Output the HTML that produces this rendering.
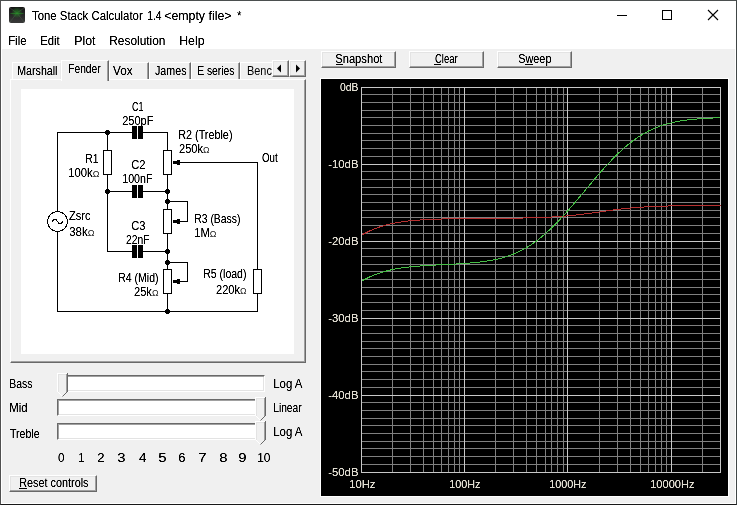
<!DOCTYPE html>
<html><head><meta charset="utf-8">
<style>
*{margin:0;padding:0;box-sizing:border-box}
html,body{width:737px;height:505px;overflow:hidden}
body{position:relative;background:#f0f0f0;font-family:"Liberation Sans",sans-serif;color:#000;font-size:11px}
.a{position:absolute}
.t{position:absolute;white-space:nowrap;line-height:11px;font-size:11px}
.btn{position:absolute;background:#f0f0f0;border-style:solid;border-width:1px;border-color:#fff #696969 #696969 #fff;box-shadow:inset -1px -1px #a0a0a0,inset 1px 1px #e3e3e3;text-align:center;font-size:11px;line-height:13px}
.u{text-decoration:underline}
.tab{position:absolute;background:#f0f0f0;border-style:solid;border-width:1px 1px 0 1px;border-color:#fff #696969 #fff #fff;box-shadow:inset -1px 0 #a0a0a0;font-size:11px;line-height:13px}
.trk{position:absolute;background:#fff;border-style:solid;border-width:1px;border-color:#696969 #fff #fff #696969;box-shadow:inset 1px 1px #a0a0a0,inset -1px -1px #e3e3e3}
.lbl{position:absolute;color:#dcdcd4;font-size:11px;line-height:11px;white-space:nowrap}
</style></head><body>
<!-- window chrome -->
<div class="a" style="left:0;top:0;width:737px;height:49px;background:#fff"></div>
<div class="a" style="left:1;top:49px;width:1px;height:455px;background:#fff;left:1px"></div>
<div class="a" style="left:735px;top:49px;width:1px;height:455px;background:#fff"></div>
<div class="a" style="left:0;top:503px;width:737px;height:1px;background:#fff"></div>
<div class="a" style="left:0;top:0;width:737px;height:505px;border-style:solid;border-width:1px;border-color:#4b4f4f #404646 #181818 #505050"></div>
<!-- app icon -->
<svg class="a" style="left:9px;top:7px" width="16" height="16" viewBox="0 0 16 16">
<defs><linearGradient id="ig" x1="0" y1="0" x2="0" y2="1"><stop offset="0" stop-color="#141414"/><stop offset="1" stop-color="#3a3a3a"/></linearGradient>
<radialGradient id="gl" cx="0.5" cy="0.35" r="0.35"><stop offset="0" stop-color="#20a020" stop-opacity="0.6"/><stop offset="1" stop-color="#30c030" stop-opacity="0"/></radialGradient></defs>
<rect x="0" y="0" width="16" height="16" rx="2" fill="url(#ig)"/>
<path d="M1 1 L8 6 L15 1 M8 6 L1 15 M8 6 L15 15" stroke="#4a5a4a" stroke-width="0.7" fill="none" opacity="0.7"/>
<rect x="0" y="0" width="16" height="16" fill="url(#gl)"/>
<path d="M1.5 6.5 H14.5" stroke="#28a028" stroke-width="0.8" opacity="0.6"/>
</svg>
<!-- window buttons -->
<div class="a" style="left:617px;top:15px;width:10px;height:1px;background:#000"></div>
<div class="a" style="left:662px;top:10px;width:10px;height:10px;border:1px solid #000"></div>
<svg class="a" style="left:707px;top:9px" width="12" height="12"><path d="M1 1 L11 11 M11 1 L1 11" stroke="#000" stroke-width="1.1"/></svg>
<!-- tab panel -->
<div class="a" style="left:10px;top:79px;width:296px;height:284px;border-style:solid;border-width:1px;border-color:#fff #696969 #696969 #fff;box-shadow:inset -1px -1px #a0a0a0"></div>
<div class="a" style="left:21px;top:89px;width:273px;height:265px;background:#fff"></div>
<!-- tabs -->
<div class="tab" style="left:12px;top:62px;width:49px;height:17px;border-right-color:#e8e8e8;box-shadow:none"></div>
<div class="tab" style="left:109px;top:62px;width:40px;height:17px"></div>
<div class="tab" style="left:149px;top:62px;width:42px;height:17px"></div>
<div class="tab" style="left:191px;top:62px;width:49px;height:17px"></div>
<div class="a" style="left:240px;top:62px;width:32px;height:17px;overflow:hidden"><div class="tab" style="left:0;top:0;width:50px;height:17px"></div></div>
<div class="tab" style="left:61px;top:60px;width:48px;height:21px;border-bottom:0"></div>
<div class="btn" style="left:272px;top:60px;width:17px;height:17px"></div>
<div class="btn" style="left:289px;top:60px;width:17px;height:17px"></div>
<svg class="a" style="left:272px;top:60px" width="34" height="17"><path d="M5 8.5 L9 4.5 L9 12.5 Z M28 8.5 L24 4.5 L24 12.5 Z" fill="#000"/></svg>
<!-- schematic -->
<svg class="a" style="left:0;top:0" width="737" height="505">
<g stroke="#000" stroke-width="1" fill="none" shape-rendering="crispEdges">
<path d="M57.5 132 V211 M57.5 232 V311.5 H257.5 V293 M57 132.5 H132 M143 132.5 H167.5 V150 M107.5 132 V150 M107.5 174 V251.5 H132 M143 251.5 H167 M107 191.5 H132 M143 191.5 H167.5 M167.5 174 V209 M167.5 233 V269 M167.5 293 V311 M167.5 201.5 H187.5 V221.5 H176 M167.5 262.5 H187.5 V281.5 H176 M176 162.5 H257.5 V269"/>
<rect x="103.5" y="150.5" width="8" height="24" fill="#fff"/>
<rect x="163.5" y="150.5" width="8" height="24" fill="#fff"/>
<rect x="163.5" y="209.5" width="8" height="24" fill="#fff"/>
<rect x="163.5" y="269.5" width="8" height="24" fill="#fff"/>
<rect x="253.5" y="269.5" width="8" height="24" fill="#fff"/>
</g>
<g fill="#000" shape-rendering="crispEdges">
<rect x="132" y="126" width="5" height="13"/><rect x="138" y="126" width="5" height="13"/>
<rect x="132" y="185" width="5" height="13"/><rect x="138" y="185" width="5" height="13"/>
<rect x="132" y="245" width="5" height="13"/><rect x="138" y="245" width="5" height="13"/>
</g>
<g fill="#000">
<rect x="105" y="131" width="5" height="3" shape-rendering="crispEdges"/><rect x="106" y="130" width="3" height="5" shape-rendering="crispEdges"/><rect x="105" y="190" width="5" height="3" shape-rendering="crispEdges"/><rect x="106" y="189" width="3" height="5" shape-rendering="crispEdges"/><rect x="165" y="190" width="5" height="3" shape-rendering="crispEdges"/><rect x="166" y="189" width="3" height="5" shape-rendering="crispEdges"/>
<rect x="165" y="200" width="5" height="3" shape-rendering="crispEdges"/><rect x="166" y="199" width="3" height="5" shape-rendering="crispEdges"/><rect x="165" y="250" width="5" height="3" shape-rendering="crispEdges"/><rect x="166" y="249" width="3" height="5" shape-rendering="crispEdges"/><rect x="165" y="261" width="5" height="3" shape-rendering="crispEdges"/><rect x="166" y="260" width="3" height="5" shape-rendering="crispEdges"/><rect x="165" y="310" width="5" height="3" shape-rendering="crispEdges"/><rect x="166" y="309" width="3" height="5" shape-rendering="crispEdges"/>
</g>
<g fill="#000" shape-rendering="crispEdges"><rect x="177" y="160" width="3" height="5"/><rect x="173" y="161" width="4" height="3"/><rect x="177" y="219" width="3" height="5"/><rect x="173" y="220" width="4" height="3"/><rect x="177" y="279" width="3" height="5"/><rect x="173" y="280" width="4" height="3"/></g>
<circle cx="57.5" cy="221.5" r="10" fill="#fff" stroke="#000" stroke-width="1" shape-rendering="crispEdges"/>
<path d="M52 222 C53.5 218.5, 56.5 218.5, 57.5 221.5 C58.5 224.5, 61.5 224.5, 63 221" fill="none" stroke="#000" stroke-width="1" shape-rendering="crispEdges"/>
</svg>
<!-- sliders -->
<svg class="a" style="left:0;top:0" width="737" height="505">
</svg>
<div class="trk" style="left:57px;top:375px;width:208px;height:17px"></div>
<div class="trk" style="left:57px;top:399px;width:208px;height:17px"></div>
<div class="trk" style="left:57px;top:423px;width:208px;height:17px"></div>
<svg class="a" style="left:0;top:0" width="737" height="505" shape-rendering="crispEdges"><path d="M57 373 H68 V392 L62.5 397.5 L57 392 Z" fill="#f0f0f0"/><path d="M57.5 392 V373.5 H67" stroke="#fff" fill="none"/><path d="M57.5 391.5 L62.5 396.5" stroke="#fff" fill="none" shape-rendering="auto"/><path d="M58.5 391.5 V374.5 H66" stroke="#e3e3e3" fill="none"/><path d="M66.5 374 V391.5" stroke="#a0a0a0" fill="none"/><path d="M67.5 373 V391.5" stroke="#696969" fill="none"/><path d="M67.5 391.5 L62.5 396.5" stroke="#696969" fill="none" shape-rendering="auto"/><path d="M255 397 H266 V416 L260.5 421.5 L255 416 Z" fill="#f0f0f0"/><path d="M255.5 416 V397.5 H265" stroke="#fff" fill="none"/><path d="M255.5 415.5 L260.5 420.5" stroke="#fff" fill="none" shape-rendering="auto"/><path d="M256.5 415.5 V398.5 H264" stroke="#e3e3e3" fill="none"/><path d="M264.5 398 V415.5" stroke="#a0a0a0" fill="none"/><path d="M265.5 397 V415.5" stroke="#696969" fill="none"/><path d="M265.5 415.5 L260.5 420.5" stroke="#696969" fill="none" shape-rendering="auto"/><path d="M255 421 H266 V440 L260.5 445.5 L255 440 Z" fill="#f0f0f0"/><path d="M255.5 440 V421.5 H265" stroke="#fff" fill="none"/><path d="M255.5 439.5 L260.5 444.5" stroke="#fff" fill="none" shape-rendering="auto"/><path d="M256.5 439.5 V422.5 H264" stroke="#e3e3e3" fill="none"/><path d="M264.5 422 V439.5" stroke="#a0a0a0" fill="none"/><path d="M265.5 421 V439.5" stroke="#696969" fill="none"/><path d="M265.5 439.5 L260.5 444.5" stroke="#696969" fill="none" shape-rendering="auto"/></svg>
<div class="btn" style="left:9px;top:475px;width:88px;height:17px;line-height:14px"></div>
<!-- top buttons -->
<div class="btn" style="left:321px;top:51px;width:75px;height:17px;line-height:14px"></div>
<div class="btn" style="left:409px;top:51px;width:75px;height:17px;line-height:14px"></div>
<div class="btn" style="left:497px;top:51px;width:75px;height:17px;line-height:14px"></div>
<!-- chart -->
<div class="a" style="left:320px;top:78px;width:409px;height:419px;background:#000;border-style:solid;border-width:1px;border-color:#fff"></div>
<svg width="737" height="505" style="position:absolute;left:0;top:0" shape-rendering="crispEdges">
<rect x="361" y="94" width="360" height="1" fill="#808080"/>
<rect x="361" y="102" width="360" height="1" fill="#808080"/>
<rect x="361" y="110" width="360" height="1" fill="#808080"/>
<rect x="361" y="117" width="360" height="1" fill="#808080"/>
<rect x="361" y="125" width="360" height="1" fill="#808080"/>
<rect x="361" y="133" width="360" height="1" fill="#808080"/>
<rect x="361" y="140" width="360" height="1" fill="#808080"/>
<rect x="361" y="148" width="360" height="1" fill="#808080"/>
<rect x="361" y="156" width="360" height="1" fill="#808080"/>
<rect x="361" y="171" width="360" height="1" fill="#808080"/>
<rect x="361" y="179" width="360" height="1" fill="#808080"/>
<rect x="361" y="187" width="360" height="1" fill="#808080"/>
<rect x="361" y="194" width="360" height="1" fill="#808080"/>
<rect x="361" y="202" width="360" height="1" fill="#808080"/>
<rect x="361" y="210" width="360" height="1" fill="#808080"/>
<rect x="361" y="217" width="360" height="1" fill="#808080"/>
<rect x="361" y="225" width="360" height="1" fill="#808080"/>
<rect x="361" y="233" width="360" height="1" fill="#808080"/>
<rect x="361" y="248" width="360" height="1" fill="#808080"/>
<rect x="361" y="256" width="360" height="1" fill="#808080"/>
<rect x="361" y="264" width="360" height="1" fill="#808080"/>
<rect x="361" y="271" width="360" height="1" fill="#808080"/>
<rect x="361" y="279" width="360" height="1" fill="#808080"/>
<rect x="361" y="287" width="360" height="1" fill="#808080"/>
<rect x="361" y="294" width="360" height="1" fill="#808080"/>
<rect x="361" y="302" width="360" height="1" fill="#808080"/>
<rect x="361" y="310" width="360" height="1" fill="#808080"/>
<rect x="361" y="325" width="360" height="1" fill="#808080"/>
<rect x="361" y="333" width="360" height="1" fill="#808080"/>
<rect x="361" y="341" width="360" height="1" fill="#808080"/>
<rect x="361" y="348" width="360" height="1" fill="#808080"/>
<rect x="361" y="356" width="360" height="1" fill="#808080"/>
<rect x="361" y="364" width="360" height="1" fill="#808080"/>
<rect x="361" y="371" width="360" height="1" fill="#808080"/>
<rect x="361" y="379" width="360" height="1" fill="#808080"/>
<rect x="361" y="387" width="360" height="1" fill="#808080"/>
<rect x="361" y="402" width="360" height="1" fill="#808080"/>
<rect x="361" y="410" width="360" height="1" fill="#808080"/>
<rect x="361" y="418" width="360" height="1" fill="#808080"/>
<rect x="361" y="425" width="360" height="1" fill="#808080"/>
<rect x="361" y="433" width="360" height="1" fill="#808080"/>
<rect x="361" y="441" width="360" height="1" fill="#808080"/>
<rect x="361" y="448" width="360" height="1" fill="#808080"/>
<rect x="361" y="456" width="360" height="1" fill="#808080"/>
<rect x="361" y="464" width="360" height="1" fill="#808080"/>
<rect x="392" y="87" width="1" height="386" fill="#808080"/>
<rect x="410" y="87" width="1" height="386" fill="#808080"/>
<rect x="423" y="87" width="1" height="386" fill="#808080"/>
<rect x="433" y="87" width="1" height="386" fill="#808080"/>
<rect x="441" y="87" width="1" height="386" fill="#808080"/>
<rect x="448" y="87" width="1" height="386" fill="#808080"/>
<rect x="454" y="87" width="1" height="386" fill="#808080"/>
<rect x="459" y="87" width="1" height="386" fill="#808080"/>
<rect x="495" y="87" width="1" height="386" fill="#808080"/>
<rect x="513" y="87" width="1" height="386" fill="#808080"/>
<rect x="526" y="87" width="1" height="386" fill="#808080"/>
<rect x="536" y="87" width="1" height="386" fill="#808080"/>
<rect x="545" y="87" width="1" height="386" fill="#808080"/>
<rect x="551" y="87" width="1" height="386" fill="#808080"/>
<rect x="557" y="87" width="1" height="386" fill="#808080"/>
<rect x="563" y="87" width="1" height="386" fill="#808080"/>
<rect x="599" y="87" width="1" height="386" fill="#808080"/>
<rect x="617" y="87" width="1" height="386" fill="#808080"/>
<rect x="630" y="87" width="1" height="386" fill="#808080"/>
<rect x="640" y="87" width="1" height="386" fill="#808080"/>
<rect x="648" y="87" width="1" height="386" fill="#808080"/>
<rect x="655" y="87" width="1" height="386" fill="#808080"/>
<rect x="661" y="87" width="1" height="386" fill="#808080"/>
<rect x="666" y="87" width="1" height="386" fill="#808080"/>
<rect x="702" y="87" width="1" height="386" fill="#808080"/>
<rect x="361" y="87" width="360" height="1" fill="#c8c8c8"/>
<rect x="361" y="164" width="360" height="1" fill="#c8c8c8"/>
<rect x="361" y="241" width="360" height="1" fill="#c8c8c8"/>
<rect x="361" y="318" width="360" height="1" fill="#c8c8c8"/>
<rect x="361" y="395" width="360" height="1" fill="#c8c8c8"/>
<rect x="361" y="472" width="360" height="1" fill="#c8c8c8"/>
<rect x="361" y="87" width="1" height="386" fill="#c8c8c8"/>
<rect x="464" y="87" width="1" height="386" fill="#c8c8c8"/>
<rect x="567" y="87" width="1" height="386" fill="#c8c8c8"/>
<rect x="671" y="87" width="1" height="386" fill="#c8c8c8"/>
<rect x="720" y="87" width="1" height="386" fill="#c8c8c8"/>
</svg><svg width="737" height="505" style="position:absolute;left:0;top:0"><polyline fill="none" stroke="#b83030" stroke-width="1" shape-rendering="crispEdges" points="361.5,235.22 362.5,234.64 363.5,234.07 364.5,233.52 365.5,232.99 366.5,232.47 367.5,231.97 368.5,231.48 369.5,231.00 370.5,230.54 371.5,230.10 372.5,229.66 373.5,229.25 374.5,228.84 375.5,228.45 376.5,228.07 377.5,227.70 378.5,227.35 379.5,227.00 380.5,226.67 381.5,226.35 382.5,226.04 383.5,225.74 384.5,225.46 385.5,225.18 386.5,224.91 387.5,224.65 388.5,224.40 389.5,224.16 390.5,223.93 391.5,223.71 392.5,223.50 393.5,223.29 394.5,223.09 395.5,222.90 396.5,222.72 397.5,222.54 398.5,222.37 399.5,222.21 400.5,222.05 401.5,221.90 402.5,221.76 403.5,221.62 404.5,221.49 405.5,221.36 406.5,221.23 407.5,221.12 408.5,221.00 409.5,220.89 410.5,220.79 411.5,220.69 412.5,220.59 413.5,220.50 414.5,220.41 415.5,220.33 416.5,220.25 417.5,220.17 418.5,220.09 419.5,220.02 420.5,219.95 421.5,219.89 422.5,219.83 423.5,219.77 424.5,219.71 425.5,219.65 426.5,219.60 427.5,219.55 428.5,219.50 429.5,219.45 430.5,219.41 431.5,219.36 432.5,219.32 433.5,219.28 434.5,219.25 435.5,219.21 436.5,219.17 437.5,219.14 438.5,219.11 439.5,219.08 440.5,219.05 441.5,219.02 442.5,218.99 443.5,218.97 444.5,218.94 445.5,218.92 446.5,218.90 447.5,218.87 448.5,218.85 449.5,218.83 450.5,218.81 451.5,218.80 452.5,218.78 453.5,218.76 454.5,218.74 455.5,218.73 456.5,218.71 457.5,218.70 458.5,218.68 459.5,218.67 460.5,218.66 461.5,218.64 462.5,218.63 463.5,218.62 464.5,218.61 465.5,218.60 466.5,218.59 467.5,218.58 468.5,218.57 469.5,218.56 470.5,218.55 471.5,218.54 472.5,218.53 473.5,218.52 474.5,218.51 475.5,218.50 476.5,218.50 477.5,218.49 478.5,218.48 479.5,218.47 480.5,218.46 481.5,218.46 482.5,218.45 483.5,218.44 484.5,218.43 485.5,218.43 486.5,218.42 487.5,218.41 488.5,218.40 489.5,218.40 490.5,218.39 491.5,218.38 492.5,218.37 493.5,218.36 494.5,218.36 495.5,218.35 496.5,218.34 497.5,218.33 498.5,218.32 499.5,218.32 500.5,218.31 501.5,218.30 502.5,218.29 503.5,218.28 504.5,218.27 505.5,218.26 506.5,218.25 507.5,218.24 508.5,218.23 509.5,218.21 510.5,218.20 511.5,218.19 512.5,218.18 513.5,218.16 514.5,218.15 515.5,218.14 516.5,218.12 517.5,218.11 518.5,218.09 519.5,218.08 520.5,218.06 521.5,218.04 522.5,218.02 523.5,218.00 524.5,217.98 525.5,217.96 526.5,217.94 527.5,217.92 528.5,217.90 529.5,217.87 530.5,217.85 531.5,217.82 532.5,217.80 533.5,217.77 534.5,217.74 535.5,217.71 536.5,217.68 537.5,217.64 538.5,217.61 539.5,217.58 540.5,217.54 541.5,217.50 542.5,217.46 543.5,217.42 544.5,217.38 545.5,217.33 546.5,217.29 547.5,217.24 548.5,217.19 549.5,217.14 550.5,217.09 551.5,217.04 552.5,216.98 553.5,216.92 554.5,216.86 555.5,216.80 556.5,216.73 557.5,216.67 558.5,216.60 559.5,216.53 560.5,216.45 561.5,216.38 562.5,216.30 563.5,216.22 564.5,216.14 565.5,216.05 566.5,215.96 567.5,215.87 568.5,215.78 569.5,215.69 570.5,215.59 571.5,215.49 572.5,215.39 573.5,215.28 574.5,215.18 575.5,215.07 576.5,214.95 577.5,214.84 578.5,214.72 579.5,214.60 580.5,214.48 581.5,214.36 582.5,214.24 583.5,214.11 584.5,213.98 585.5,213.85 586.5,213.72 587.5,213.58 588.5,213.45 589.5,213.31 590.5,213.17 591.5,213.03 592.5,212.89 593.5,212.75 594.5,212.61 595.5,212.46 596.5,212.32 597.5,212.18 598.5,212.03 599.5,211.89 600.5,211.74 601.5,211.60 602.5,211.45 603.5,211.31 604.5,211.17 605.5,211.03 606.5,210.89 607.5,210.74 608.5,210.61 609.5,210.47 610.5,210.33 611.5,210.20 612.5,210.06 613.5,209.93 614.5,209.80 615.5,209.67 616.5,209.55 617.5,209.42 618.5,209.30 619.5,209.18 620.5,209.06 621.5,208.95 622.5,208.84 623.5,208.72 624.5,208.62 625.5,208.51 626.5,208.41 627.5,208.31 628.5,208.21 629.5,208.11 630.5,208.02 631.5,207.93 632.5,207.84 633.5,207.75 634.5,207.67 635.5,207.59 636.5,207.51 637.5,207.43 638.5,207.36 639.5,207.28 640.5,207.21 641.5,207.15 642.5,207.08 643.5,207.02 644.5,206.96 645.5,206.90 646.5,206.84 647.5,206.79 648.5,206.73 649.5,206.68 650.5,206.63 651.5,206.58 652.5,206.54 653.5,206.49 654.5,206.45 655.5,206.41 656.5,206.37 657.5,206.33 658.5,206.29 659.5,206.26 660.5,206.22 661.5,206.19 662.5,206.16 663.5,206.13 664.5,206.10 665.5,206.07 666.5,206.04 667.5,206.02 668.5,205.99 669.5,205.97 670.5,205.95 671.5,205.92 672.5,205.90 673.5,205.88 674.5,205.86 675.5,205.85 676.5,205.83 677.5,205.81 678.5,205.79 679.5,205.78 680.5,205.76 681.5,205.75 682.5,205.73 683.5,205.72 684.5,205.71 685.5,205.70 686.5,205.68 687.5,205.67 688.5,205.66 689.5,205.65 690.5,205.64 691.5,205.63 692.5,205.62 693.5,205.62 694.5,205.61 695.5,205.60 696.5,205.59 697.5,205.58 698.5,205.58 699.5,205.57 700.5,205.56 701.5,205.56 702.5,205.55 703.5,205.55 704.5,205.54 705.5,205.54 706.5,205.53 707.5,205.53 708.5,205.52 709.5,205.52 710.5,205.51 711.5,205.51 712.5,205.51 713.5,205.50 714.5,205.50 715.5,205.50 716.5,205.49 717.5,205.49 718.5,205.49 719.5,205.48 720.5,205.48"/><polyline fill="none" stroke="#46c046" stroke-width="1" shape-rendering="crispEdges" points="361.5,281.21 362.5,280.63 363.5,280.07 364.5,279.53 365.5,279.00 366.5,278.48 367.5,277.98 368.5,277.50 369.5,277.03 370.5,276.57 371.5,276.13 372.5,275.70 373.5,275.29 374.5,274.89 375.5,274.50 376.5,274.12 377.5,273.76 378.5,273.40 379.5,273.06 380.5,272.74 381.5,272.42 382.5,272.11 383.5,271.81 384.5,271.53 385.5,271.25 386.5,270.99 387.5,270.73 388.5,270.48 389.5,270.24 390.5,270.01 391.5,269.79 392.5,269.58 393.5,269.37 394.5,269.17 395.5,268.98 396.5,268.80 397.5,268.62 398.5,268.45 399.5,268.29 400.5,268.13 401.5,267.98 402.5,267.83 403.5,267.69 404.5,267.56 405.5,267.43 406.5,267.30 407.5,267.18 408.5,267.06 409.5,266.95 410.5,266.84 411.5,266.74 412.5,266.64 413.5,266.54 414.5,266.45 415.5,266.36 416.5,266.27 417.5,266.18 418.5,266.10 419.5,266.02 420.5,265.95 421.5,265.87 422.5,265.80 423.5,265.73 424.5,265.67 425.5,265.60 426.5,265.54 427.5,265.48 428.5,265.42 429.5,265.36 430.5,265.30 431.5,265.24 432.5,265.19 433.5,265.14 434.5,265.08 435.5,265.03 436.5,264.98 437.5,264.93 438.5,264.88 439.5,264.83 440.5,264.78 441.5,264.73 442.5,264.68 443.5,264.63 444.5,264.58 445.5,264.54 446.5,264.49 447.5,264.44 448.5,264.39 449.5,264.34 450.5,264.29 451.5,264.24 452.5,264.18 453.5,264.13 454.5,264.08 455.5,264.02 456.5,263.97 457.5,263.91 458.5,263.85 459.5,263.79 460.5,263.73 461.5,263.67 462.5,263.60 463.5,263.53 464.5,263.46 465.5,263.39 466.5,263.32 467.5,263.24 468.5,263.16 469.5,263.08 470.5,263.00 471.5,262.91 472.5,262.82 473.5,262.73 474.5,262.63 475.5,262.53 476.5,262.43 477.5,262.32 478.5,262.21 479.5,262.09 480.5,261.97 481.5,261.85 482.5,261.72 483.5,261.58 484.5,261.44 485.5,261.30 486.5,261.14 487.5,260.99 488.5,260.82 489.5,260.65 490.5,260.48 491.5,260.30 492.5,260.11 493.5,259.91 494.5,259.70 495.5,259.49 496.5,259.27 497.5,259.04 498.5,258.80 499.5,258.56 500.5,258.30 501.5,258.04 502.5,257.76 503.5,257.48 504.5,257.19 505.5,256.88 506.5,256.57 507.5,256.24 508.5,255.90 509.5,255.55 510.5,255.19 511.5,254.82 512.5,254.43 513.5,254.03 514.5,253.62 515.5,253.20 516.5,252.76 517.5,252.31 518.5,251.84 519.5,251.37 520.5,250.87 521.5,250.36 522.5,249.84 523.5,249.30 524.5,248.75 525.5,248.18 526.5,247.60 527.5,247.00 528.5,246.39 529.5,245.76 530.5,245.11 531.5,244.45 532.5,243.77 533.5,243.08 534.5,242.37 535.5,241.65 536.5,240.91 537.5,240.15 538.5,239.38 539.5,238.59 540.5,237.79 541.5,236.97 542.5,236.14 543.5,235.29 544.5,234.43 545.5,233.55 546.5,232.66 547.5,231.75 548.5,230.83 549.5,229.90 550.5,228.95 551.5,227.99 552.5,227.01 553.5,226.03 554.5,225.03 555.5,224.02 556.5,222.99 557.5,221.96 558.5,220.91 559.5,219.86 560.5,218.79 561.5,217.71 562.5,216.63 563.5,215.53 564.5,214.43 565.5,213.31 566.5,212.19 567.5,211.07 568.5,209.93 569.5,208.79 570.5,207.64 571.5,206.48 572.5,205.32 573.5,204.16 574.5,202.99 575.5,201.81 576.5,200.64 577.5,199.45 578.5,198.27 579.5,197.08 580.5,195.89 581.5,194.70 582.5,193.51 583.5,192.31 584.5,191.12 585.5,189.92 586.5,188.73 587.5,187.54 588.5,186.34 589.5,185.15 590.5,183.97 591.5,182.78 592.5,181.60 593.5,180.42 594.5,179.24 595.5,178.07 596.5,176.90 597.5,175.74 598.5,174.58 599.5,173.43 600.5,172.28 601.5,171.14 602.5,170.01 603.5,168.89 604.5,167.77 605.5,166.66 606.5,165.56 607.5,164.47 608.5,163.39 609.5,162.32 610.5,161.26 611.5,160.21 612.5,159.17 613.5,158.14 614.5,157.12 615.5,156.12 616.5,155.12 617.5,154.14 618.5,153.18 619.5,152.22 620.5,151.28 621.5,150.36 622.5,149.44 623.5,148.54 624.5,147.66 625.5,146.79 626.5,145.93 627.5,145.09 628.5,144.27 629.5,143.46 630.5,142.66 631.5,141.89 632.5,141.12 633.5,140.38 634.5,139.64 635.5,138.93 636.5,138.23 637.5,137.55 638.5,136.88 639.5,136.22 640.5,135.59 641.5,134.97 642.5,134.36 643.5,133.77 644.5,133.20 645.5,132.64 646.5,132.09 647.5,131.57 648.5,131.05 649.5,130.55 650.5,130.07 651.5,129.60 652.5,129.14 653.5,128.70 654.5,128.27 655.5,127.85 656.5,127.45 657.5,127.06 658.5,126.68 659.5,126.31 660.5,125.96 661.5,125.62 662.5,125.29 663.5,124.97 664.5,124.66 665.5,124.36 666.5,124.07 667.5,123.80 668.5,123.53 669.5,123.27 670.5,123.02 671.5,122.78 672.5,122.55 673.5,122.33 674.5,122.12 675.5,121.91 676.5,121.71 677.5,121.52 678.5,121.34 679.5,121.16 680.5,120.99 681.5,120.83 682.5,120.67 683.5,120.52 684.5,120.38 685.5,120.24 686.5,120.11 687.5,119.98 688.5,119.86 689.5,119.74 690.5,119.62 691.5,119.52 692.5,119.41 693.5,119.31 694.5,119.22 695.5,119.12 696.5,119.03 697.5,118.95 698.5,118.87 699.5,118.79 700.5,118.72 701.5,118.64 702.5,118.58 703.5,118.51 704.5,118.45 705.5,118.39 706.5,118.33 707.5,118.27 708.5,118.22 709.5,118.17 710.5,118.12 711.5,118.07 712.5,118.03 713.5,117.99 714.5,117.95 715.5,117.91 716.5,117.87 717.5,117.83 718.5,117.80 719.5,117.77 720.5,117.73"/></svg><svg class="a" style="left:0;top:0;will-change:transform" width="737" height="505">
<filter id="crisp" x="0" y="0" width="737" height="505" filterUnits="userSpaceOnUse"><feComponentTransfer><feFuncA type="linear" slope="1.6" intercept="-0.15"/></feComponentTransfer></filter>
<g font-family="Liberation Sans" fill="#000" filter="url(#crisp)">
<text x="32.00" y="20" font-size="12" textLength="110.70" lengthAdjust="spacingAndGlyphs">Tone Stack Calculator</text>
<text x="147.20" y="20" font-size="12" textLength="14.30" lengthAdjust="spacingAndGlyphs">1.4</text>
<text x="164.20" y="20" font-size="12" textLength="67.30" lengthAdjust="spacingAndGlyphs">&lt;empty file&gt;</text>
<text x="237.00" y="20" font-size="12" textLength="4.50" lengthAdjust="spacingAndGlyphs">*</text>
<text x="8.20" y="45" font-size="12" textLength="18.30" lengthAdjust="spacingAndGlyphs">File</text>
<text x="40.20" y="45" font-size="12" textLength="19.50" lengthAdjust="spacingAndGlyphs">Edit</text>
<text x="74.20" y="45" font-size="12" textLength="21.30" lengthAdjust="spacingAndGlyphs">Plot</text>
<text x="109.20" y="45" font-size="12" textLength="56.30" lengthAdjust="spacingAndGlyphs">Resolution</text>
<text x="179.20" y="45" font-size="12" textLength="25.30" lengthAdjust="spacingAndGlyphs">Help</text>
<text x="17.20" y="75" font-size="12" textLength="40.30" lengthAdjust="spacingAndGlyphs">Marshall</text>
<text x="68.20" y="73" font-size="12" textLength="32.50" lengthAdjust="spacingAndGlyphs">Fender</text>
<text x="113.00" y="75" font-size="12" textLength="19.50" lengthAdjust="spacingAndGlyphs">Vox</text>
<text x="155.00" y="75" font-size="12" textLength="31.50" lengthAdjust="spacingAndGlyphs">James</text>
<text x="197.20" y="75" font-size="12" textLength="37.30" lengthAdjust="spacingAndGlyphs">E series</text>
<text x="335.20" y="63" font-size="12" textLength="47.30" lengthAdjust="spacingAndGlyphs">Snapshot</text>
<text x="435.00" y="63" font-size="12" textLength="22.70" lengthAdjust="spacingAndGlyphs">Clear</text>
<text x="518.20" y="63" font-size="12" textLength="33.30" lengthAdjust="spacingAndGlyphs">Sweep</text>
<text x="132.00" y="111" font-size="12" textLength="11.50" lengthAdjust="spacingAndGlyphs">C1</text>
<text x="122.20" y="125" font-size="12" textLength="31.30" lengthAdjust="spacingAndGlyphs">250pF</text>
<text x="178.20" y="139" font-size="12" textLength="54.30" lengthAdjust="spacingAndGlyphs">R2 (Treble)</text>
<text x="179.00" y="153" font-size="12" textLength="30.50" lengthAdjust="spacingAndGlyphs">250k<tspan font-size='9.5' fill='#505050'>Ω</tspan></text>
<text x="262.00" y="162" font-size="12" textLength="15.70" lengthAdjust="spacingAndGlyphs">Out</text>
<text x="85.20" y="163" font-size="12" textLength="13.30" lengthAdjust="spacingAndGlyphs">R1</text>
<text x="68.20" y="177" font-size="12" textLength="31.30" lengthAdjust="spacingAndGlyphs">100k<tspan font-size='9.5' fill='#505050'>Ω</tspan></text>
<text x="131.20" y="169" font-size="12" textLength="14.30" lengthAdjust="spacingAndGlyphs">C2</text>
<text x="122.20" y="183" font-size="12" textLength="30.30" lengthAdjust="spacingAndGlyphs">100nF</text>
<text x="69.00" y="220" font-size="12" textLength="21.50" lengthAdjust="spacingAndGlyphs">Zsrc</text>
<text x="69.20" y="236" font-size="12" textLength="25.30" lengthAdjust="spacingAndGlyphs">38k<tspan font-size='9.5' fill='#505050'>Ω</tspan></text>
<text x="194.20" y="223" font-size="12" textLength="46.30" lengthAdjust="spacingAndGlyphs">R3 (Bass)</text>
<text x="194.20" y="237" font-size="12" textLength="22.30" lengthAdjust="spacingAndGlyphs">1M<tspan font-size='9.5' fill='#505050'>Ω</tspan></text>
<text x="131.20" y="230" font-size="12" textLength="14.30" lengthAdjust="spacingAndGlyphs">C3</text>
<text x="126.00" y="244" font-size="12" textLength="23.50" lengthAdjust="spacingAndGlyphs">22nF</text>
<text x="118.20" y="282" font-size="12" textLength="40.30" lengthAdjust="spacingAndGlyphs">R4 (Mid)</text>
<text x="134.00" y="296" font-size="12" textLength="24.50" lengthAdjust="spacingAndGlyphs">25k<tspan font-size='9.5' fill='#505050'>Ω</tspan></text>
<text x="203.20" y="278" font-size="12" textLength="43.30" lengthAdjust="spacingAndGlyphs">R5 (load)</text>
<text x="216.00" y="294" font-size="12" textLength="30.50" lengthAdjust="spacingAndGlyphs">220k<tspan font-size='9.5' fill='#505050'>Ω</tspan></text>
<text x="9.20" y="388" font-size="12" textLength="23.30" lengthAdjust="spacingAndGlyphs">Bass</text>
<text x="9.20" y="412" font-size="12" textLength="18.30" lengthAdjust="spacingAndGlyphs">Mid</text>
<text x="10.00" y="438" font-size="12" textLength="29.50" lengthAdjust="spacingAndGlyphs">Treble</text>
<text x="273.20" y="388" font-size="12" textLength="29.30" lengthAdjust="spacingAndGlyphs">Log A</text>
<text x="273.20" y="412" font-size="12" textLength="28.50" lengthAdjust="spacingAndGlyphs">Linear</text>
<text x="273.20" y="436" font-size="12" textLength="29.30" lengthAdjust="spacingAndGlyphs">Log A</text>
<text x="58.00" y="462" font-size="12" textLength="6.50" lengthAdjust="spacingAndGlyphs">0</text>
<text x="78.20" y="462" font-size="12" textLength="6.30" lengthAdjust="spacingAndGlyphs">1</text>
<text x="97.20" y="462" font-size="12" textLength="7.30" lengthAdjust="spacingAndGlyphs">2</text>
<text x="117.20" y="462" font-size="12" textLength="8.30" lengthAdjust="spacingAndGlyphs">3</text>
<text x="139.00" y="462" font-size="12" textLength="7.50" lengthAdjust="spacingAndGlyphs">4</text>
<text x="158.20" y="462" font-size="12" textLength="8.30" lengthAdjust="spacingAndGlyphs">5</text>
<text x="178.20" y="462" font-size="12" textLength="7.30" lengthAdjust="spacingAndGlyphs">6</text>
<text x="198.20" y="462" font-size="12" textLength="8.30" lengthAdjust="spacingAndGlyphs">7</text>
<text x="219.20" y="462" font-size="12" textLength="8.30" lengthAdjust="spacingAndGlyphs">8</text>
<text x="238.20" y="462" font-size="12" textLength="8.30" lengthAdjust="spacingAndGlyphs">9</text>
<text x="257.20" y="462" font-size="12" textLength="13.30" lengthAdjust="spacingAndGlyphs">10</text>
<text x="19.20" y="487" font-size="12" textLength="69.30" lengthAdjust="spacingAndGlyphs">Reset controls</text>
</g>
<g font-family="Liberation Sans" fill="#e0dcd0" filter="url(#crisp)">
<text x="340.00" y="91" font-size="11" textLength="18.50" lengthAdjust="spacingAndGlyphs">0dB</text>
<text x="328.20" y="168" font-size="11" textLength="30.30" lengthAdjust="spacingAndGlyphs">-10dB</text>
<text x="328.20" y="245" font-size="11" textLength="30.30" lengthAdjust="spacingAndGlyphs">-20dB</text>
<text x="328.20" y="322" font-size="11" textLength="30.30" lengthAdjust="spacingAndGlyphs">-30dB</text>
<text x="328.20" y="399" font-size="11" textLength="30.30" lengthAdjust="spacingAndGlyphs">-40dB</text>
<text x="328.20" y="476" font-size="11" textLength="30.30" lengthAdjust="spacingAndGlyphs">-50dB</text>
<text x="349.20" y="488" font-size="11" textLength="26.30" lengthAdjust="spacingAndGlyphs">10Hz</text>
<text x="449.20" y="488" font-size="11" textLength="31.30" lengthAdjust="spacingAndGlyphs">100Hz</text>
<text x="549.20" y="488" font-size="11" textLength="37.30" lengthAdjust="spacingAndGlyphs">1000Hz</text>
<text x="650.20" y="488" font-size="11" textLength="44.30" lengthAdjust="spacingAndGlyphs">10000Hz</text>
</g>
<clipPath id="bclip"><rect x="240" y="62" width="32" height="18"/></clipPath>
<text x="247" y="75" font-family="Liberation Sans" font-size="12" textLength="31" lengthAdjust="spacingAndGlyphs" clip-path="url(#bclip)">Bench</text>
<g fill="#000" shape-rendering="crispEdges">
<rect x="336" y="64" width="7" height="1"/>
<rect x="434" y="64" width="7" height="1"/>
<rect x="525" y="64" width="8" height="1"/>
<rect x="19" y="488" width="8" height="1"/>
</g>
</svg></body></html>
